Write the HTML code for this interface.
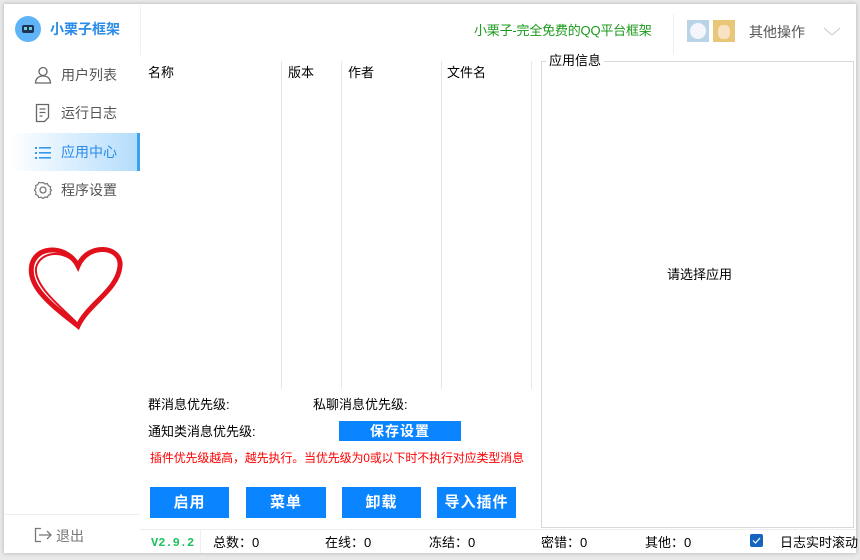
<!DOCTYPE html>
<html><head><meta charset="utf-8"><style>
*{margin:0;padding:0;box-sizing:border-box}
body{width:860px;height:560px;background:#e9e9e9;font-family:"Liberation Sans","Noto Sans CJK SC",sans-serif;font-size:13px;line-height:16px;color:#000;position:relative;overflow:hidden}
.win{position:absolute;left:4px;top:4px;width:852px;height:549px;background:#fff;box-shadow:0 0 4px rgba(0,0,0,.25)}
.a{position:absolute;white-space:nowrap}
.side{color:#555;font-size:14px;line-height:18px}
.btn{position:absolute;background:#0a84ff;color:#fff;font-size:15px;font-weight:bold;text-align:center;line-height:31px;height:31px;letter-spacing:1px}
.vl{position:absolute;width:1px;background:#e4e8ee}
</style></head><body>
<div class="win"></div>
<div class="a" style="left:15px;top:16px;width:26px;height:26px;border-radius:50%;background:#5eb4f7"></div>
<div class="a" style="left:22px;top:25px;width:12px;height:8px;background:#1b3553;border-radius:2px"></div>
<div class="a" style="left:24px;top:27px;width:3px;height:3px;background:#7cd;"></div>
<div class="a" style="left:29px;top:27px;width:3px;height:3px;background:#7cd;"></div>
<div class="a" style="left:50px;top:20px;font-size:14px;line-height:18px;color:#2a8ce8;font-weight:bold">小栗子框架</div>
<div class="vl" style="left:140px;top:5px;height:50px;background:#eef2f6"></div>
<div class="a" style="left:474px;top:23px;font-size:13px;letter-spacing:-0.2px;color:#1a9a1a">小栗子-完全免费的QQ平台框架</div>
<div class="vl" style="left:673px;top:14px;height:40px;background:#eee"></div>
<div class="a" style="left:687px;top:20px;width:22px;height:22px;background:#b8d4e6"><div style="margin:3px;width:16px;height:16px;border-radius:50%;background:#f4f6fb"></div></div>
<div class="a" style="left:713px;top:20px;width:22px;height:22px;background:#e8c878"><div style="margin:5px 5px;width:12px;height:14px;border-radius:40%;background:#f7e2c4"></div></div>
<div class="a" style="left:749px;top:23px;font-size:14px;line-height:18px;color:#555">其他操作</div>
<svg class="a" style="left:823px;top:27px" width="18" height="10"><path d="M1 1 L9 8 L17 1" stroke="#ccd6e0" fill="none" stroke-width="1.3"/></svg>
<div class="a" style="left:10px;top:133px;width:130px;height:38px;background:linear-gradient(90deg,#fff,#b3dcfc)"></div>
<div class="a" style="left:137px;top:133px;width:3px;height:38px;background:#3aa2f4"></div>
<svg class="a" style="left:34px;top:66px" width="18" height="18"><circle cx="9" cy="5.5" r="4" stroke="#666" fill="none" stroke-width="1.3"/><path d="M1.5 17 Q2 10 9 10 Q16 10 16.5 17 Z" stroke="#666" fill="none" stroke-width="1.3"/></svg>
<div class="a side" style="left:61px;top:66px">用户列表</div>
<svg class="a" style="left:35px;top:103px" width="16" height="20"><path d="M1.5 1.5h12v13l-4 4h-8z" stroke="#666" fill="none" stroke-width="1.3"/><path d="M4.5 6h6M4.5 9.5h6M4.5 13h3" stroke="#666" stroke-width="1.3"/></svg>
<div class="a side" style="left:61px;top:104px">运行日志</div>
<svg class="a" style="left:34px;top:146px" width="18" height="14"><g fill="#3399ee"><rect x="1" y="1" width="2" height="2"/><rect x="1" y="6" width="2" height="2"/><rect x="1" y="11" width="2" height="2"/><rect x="5" y="1" width="12" height="1.6"/><rect x="5" y="6" width="12" height="1.6"/><rect x="5" y="11" width="12" height="1.6"/></g></svg>
<div class="a side" style="left:61px;top:143px;color:#2a8ce8">应用中心</div>
<svg class="a" style="left:34px;top:181px" width="18" height="18"><circle cx="9" cy="9" r="3" stroke="#777" fill="none" stroke-width="1.3"/><path d="M9 1.5l2 1.5 2.4-.4 1 2.2 2.2 1-.4 2.4L17.5 9l-1.3 1.8.4 2.4-2.2 1-1 2.2-2.4-.4L9 17.5l-1.8-1.3-2.4.4-1-2.2-2.2-1 .4-2.4L.5 9l1.5-2-.4-2.4 2.2-1 1-2.2 2.4.4z" stroke="#777" fill="none" stroke-width="1.2"/></svg>
<div class="a side" style="left:61px;top:181px">程序设置</div>
<svg class="a" style="left:26px;top:240px" width="100" height="92"><path d="M52 26 C42 6 12 4 6 24 C0 48 30 68 52 86 C62 64 92 50 94 26 C96 6 62 2 52 26Z" stroke="#e0101c" fill="none" stroke-width="5"/><path d="M50 24 C40 10 14 10 10 28 C8 46 34 66 50 82" stroke="#e0101c" fill="none" stroke-width="2"/></svg>
<div class="a" style="left:5px;top:514px;width:135px;height:1px;background:#eee"></div>
<svg class="a" style="left:34px;top:527px" width="18" height="16"><path d="M7 1.5H1.5v13H7" stroke="#777" fill="none" stroke-width="1.3"/><path d="M5 8h12M13 4l4 4-4 4" stroke="#777" fill="none" stroke-width="1.3"/></svg>
<div class="a side" style="left:56px;top:527px;color:#777">退出</div>
<div class="vl" style="left:281px;top:61px;height:328px"></div>
<div class="vl" style="left:341px;top:61px;height:328px"></div>
<div class="vl" style="left:441px;top:61px;height:328px"></div>
<div class="vl" style="left:531px;top:61px;height:328px"></div>
<div class="a" style="left:148px;top:65px">名称</div>
<div class="a" style="left:288px;top:65px">版本</div>
<div class="a" style="left:348px;top:65px">作者</div>
<div class="a" style="left:447px;top:65px">文件名</div>
<div class="a" style="left:541px;top:61px;width:313px;height:467px;border:1px solid #d8d8d8"></div>
<div class="a" style="left:546px;top:53px;background:#fff;padding:0 3px">应用信息</div>
<div class="a" style="left:667px;top:267px">请选择应用</div>
<div class="a" style="left:148px;top:397px">群消息优先级:</div>
<div class="a" style="left:313px;top:397px">私聊消息优先级:</div>
<div class="a" style="left:148px;top:424px">通知类消息优先级:</div>
<div class="a" style="left:339px;top:421px;width:122px;height:20px;background:#0a84ff;color:#fff;font-weight:bold;font-size:14px;text-align:center;line-height:20px;letter-spacing:1px">保存设置</div>
<div class="a" style="left:150px;top:450px;color:#f00;font-size:12px;letter-spacing:-0.15px">插件优先级越高，越先执行。当优先级为0或以下时不执行对应类型消息</div>
<div class="btn" style="left:150px;top:487px;width:79px">启用</div>
<div class="btn" style="left:246px;top:487px;width:80px">菜单</div>
<div class="btn" style="left:342px;top:487px;width:79px">卸载</div>
<div class="btn" style="left:437px;top:487px;width:79px">导入插件</div>
<div class="a" style="left:140px;top:529px;width:716px;height:1px;background:#eee"></div>
<div class="vl" style="left:200px;top:530px;height:23px;background:#eee"></div>
<div class="a" style="left:151px;top:535px;font-family:'Liberation Mono',monospace;font-weight:bold;font-size:12px;color:#20c060">V2.9.2</div>
<div class="a" style="left:213px;top:535px">总数：0</div>
<div class="a" style="left:325px;top:535px">在线：0</div>
<div class="a" style="left:429px;top:535px">冻结：0</div>
<div class="a" style="left:541px;top:535px">密错：0</div>
<div class="a" style="left:645px;top:535px">其他：0</div>
<div class="a" style="left:750px;top:534px;width:13px;height:13px;background:#1565c0;border-radius:2px"></div>
<svg class="a" style="left:752px;top:537px" width="9" height="7"><path d="M1 3.5l2.5 2.5L8 1" stroke="#fff" fill="none" stroke-width="1.2"/></svg>
<div class="a" style="left:780px;top:535px">日志实时滚动</div>
</body></html>
